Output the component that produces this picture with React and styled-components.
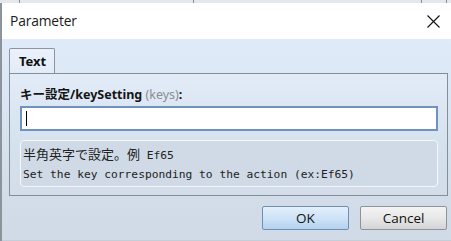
import styled, { createGlobalStyle } from "styled-components";

const GlobalStyle = createGlobalStyle`
  html, body {
    margin: 0;
    padding: 0;
    width: 451px;
    height: 241px;
    overflow: hidden;
    background: #d9dde3;
  }
  #root {
    height: 100%;
  }
`;

const Screen = styled.div`
  display: flex;
  flex-direction: column;
  width: 451px;
  height: 241px;
  font-family: "Noto Sans", "Noto Sans CJK JP", sans-serif;
`;

// bit of the window behind the dialog
const BehindStrip = styled.div`
  height: 3px;
  flex-shrink: 0;
  background: #e4e7eb;
  display: flex;
`;

const Divider = styled.span`
  width: 1px;
  height: 100%;
  background: #8a8f96;
  margin-left: ${(p) => p.$at}px;
`;

const Dialog = styled.div`
  flex: 1;
  display: flex;
  flex-direction: column;
  border-left: 2px solid #8d939b;
  min-height: 0;
`;

const TitleBar = styled.div`
  height: 36px;
  flex-shrink: 0;
  background: #ffffff;
  display: flex;
  align-items: center;
  justify-content: space-between;
  padding: 0 10px 0 8px;
`;

const Title = styled.span`
  font-family: "Open Sans", "Noto Sans", sans-serif;
  font-size: 13.8px;
  color: #1a1a1a;
  letter-spacing: -0.15px;
  margin-top: -1px;
`;

const CloseButton = styled.div`
  width: 14px;
  height: 14px;
  display: flex;
  align-items: center;
  justify-content: center;
  margin-right: 1px;
`;

const Body = styled.div`
  flex: 1;
  display: flex;
  flex-direction: column;
  padding: 9px 3px 0 7px;
  background: linear-gradient(#e0ebfa, #d1dce8 85%, #d0dbe7);
  border-bottom: 1px solid #c4ced9;
`;

const TabRow = styled.div`
  display: flex;
  height: 25px;
`;

const Tab = styled.div`
  width: 46px;
  height: 25px;
  box-sizing: border-box;
  border: 1px solid #8c949d;
  border-bottom: none;
  border-radius: 2px 2px 0 0;
  background: linear-gradient(#eaf1fb, #e2ecf9);
  font-size: 13px;
  font-weight: 700;
  color: #111;
  padding: 3px 0 0 9px;
  position: relative;
  z-index: 1;
  margin-bottom: -1px;
`;

const Panel = styled.div`
  height: 123px;
  box-sizing: border-box;
  border: 1px solid #858d96;
  background: linear-gradient(#e2ecf9, #d6e1ee 60%, #d2dde9);
  padding: 13px 9px 0 10px;
  display: flex;
  flex-direction: column;
`;

const Label = styled.div`
  font-family: "Noto Sans", "Noto Sans CJK JP", sans-serif;
  font-size: 12.5px;
  font-weight: 700;
  color: #151515;
  line-height: 16px;
  height: 19px;
`;

const Hint = styled.span`
  color: #8a8d91;
  font-weight: 400;
`;

const InputBox = styled.div`
  height: 25px;
  box-sizing: border-box;
  border: 2px solid #6f92c1;
  background: #ffffff;
  display: flex;
  align-items: center;
  padding-left: 4px;
`;

const Caret = styled.span`
  width: 1px;
  height: 15px;
  background: #000;
`;

const HelpBox = styled.div`
  margin-top: 9px;
  height: 47px;
  box-sizing: border-box;
  border: 1px solid #f4f7fb;
  border-radius: 4px;
  background: #cfdae6;
  padding: 3px 0 0 2px;
  color: #222;
  line-height: 19px;
`;

const HelpLine = styled.div`
  white-space: pre;
  font-family: "DejaVu Sans Mono", monospace;
  font-size: 11.25px;
`;

const Jp = styled.span`
  font-family: "Noto Sans CJK JP", sans-serif;
  font-size: 13px;
`;

const ButtonRow = styled.div`
  display: flex;
  justify-content: flex-end;
  gap: 11px;
  margin-top: 10px;
  padding-right: 1px;
`;

const Button = styled.div`
  width: 87px;
  height: 24px;
  box-sizing: border-box;
  border: 1px solid ${(p) => (p.$primary ? "#6e8fb3" : "#8f9297")};
  border-radius: 2px;
  background: ${(p) =>
    p.$primary
      ? "linear-gradient(#e3effb, #cfe3f7 50%, #b4d2ef)"
      : "linear-gradient(#f3f3f3, #e8e8e8 50%, #d3d4d6)"};
  display: flex;
  align-items: center;
  justify-content: center;
  font-family: "Open Sans", "Noto Sans", sans-serif;
  font-size: 13.5px;
  color: #111;
`;

export default function App() {
  return (
    <>
      <GlobalStyle />
      <Screen>
        <BehindStrip>
          <Divider $at={19} />
          <Divider $at={173} />
          <Divider $at={227} />
          <Divider $at={24} />
        </BehindStrip>
        <Dialog>
          <TitleBar>
            <Title>Parameter</Title>
            <CloseButton>
              <svg width="13" height="13" viewBox="0 0 13 13">
                <path d="M0.5 0.5 L12.5 12.5 M12.5 0.5 L0.5 12.5" stroke="#111" strokeWidth="1.1" fill="none" />
              </svg>
            </CloseButton>
          </TitleBar>
          <Body>
            <TabRow>
              <Tab>Text</Tab>
            </TabRow>
            <Panel>
              <Label>
                キー設定/keySetting <Hint>(keys)</Hint>:
              </Label>
              <InputBox>
                <Caret />
              </InputBox>
              <HelpBox>
                <HelpLine>
                  <Jp>半角英字で設定。例</Jp> Ef65
                </HelpLine>
                <HelpLine>Set the key corresponding to the action (ex:Ef65)</HelpLine>
              </HelpBox>
            </Panel>
            <ButtonRow>
              <Button $primary>OK</Button>
              <Button>Cancel</Button>
            </ButtonRow>
          </Body>
        </Dialog>
      </Screen>
    </>
  );
}
